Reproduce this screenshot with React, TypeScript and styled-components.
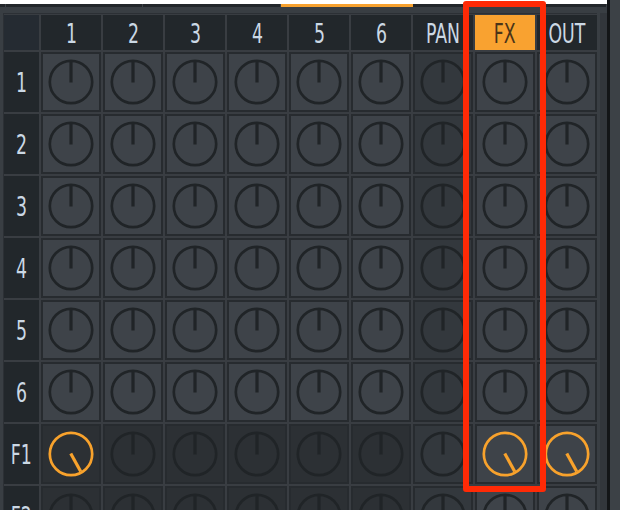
import styled, { createGlobalStyle } from "styled-components";

const GlobalStyle = createGlobalStyle`
  body {
    margin: 0;
    background: #ffffff;
    font-family: "Liberation Sans Narrow", "DejaVu Sans Condensed", "Liberation Sans", sans-serif;
  }
`;

type Tone = "normal" | "pan" | "dim";

const columns = ["1", "2", "3", "4", "5", "6", "PAN", "FX", "OUT"];
const rows = ["1", "2", "3", "4", "5", "6", "F1", "F2"];

const toneFor = (row: string, col: string): Tone => {
  const isFx = row.startsWith("F");
  if (col === "FX" || col === "OUT") return "normal";
  if (col === "PAN") return "pan";
  return isFx ? "dim" : "normal";
};

const isOn = (row: string, col: string) =>
  row === "F1" && (col === "1" || col === "FX" || col === "OUT");

const Knob = ({ on }: { on: boolean }) => {
  const color = on ? "#f8a22c" : "#202427";
  const angle = on ? 151 : 0;
  return (
    <svg width="46" height="46" viewBox="0 0 46 46">
      <circle cx="23" cy="23" r="21.2" fill="none" stroke={color} strokeWidth="2.7" />
      <line
        x1="23"
        y1="23.5"
        x2="23"
        y2="3"
        stroke={color}
        strokeWidth="3.2"
        transform={`rotate(${angle} 23 23)`}
      />
    </svg>
  );
};

const App = () => {
  return (
    <>
      <GlobalStyle />
      <Page>
        <Workspace>
          <TopWhite />
          <TopBar>
            <BarSeg $w={5} />
            <BarSeg $w={136} />
            <BarSeg $w={137} />
            <BarAccent $w={132} />
            <BarSeg $w={0} $grow />
          </TopBar>
          <Content>
            <Grid>
              <Corner />
              {columns.map((c) => (
                <HeaderCell key={c} $active={c === "FX"}>
                  <Label>{c}</Label>
                </HeaderCell>
              ))}
              {rows.map((r) => (
                <Row key={r} r={r} />
              ))}
            </Grid>
            <Track />
          </Content>
        </Workspace>
        <Divider />
        <SidePanel />
        <Highlight />
      </Page>
    </>
  );
};

const Row = ({ r }: { r: string }) => (
  <>
    <RowLabel>
      <Label>{r}</Label>
    </RowLabel>
    {columns.map((c) => (
      <KnobCell key={c} $tone={toneFor(r, c)}>
        <Knob on={isOn(r, c)} />
      </KnobCell>
    ))}
  </>
);

export default App;

const Page = styled.div`
  position: relative;
  display: flex;
  width: 620px;
  height: 510px;
  overflow: hidden;
`;

const Workspace = styled.div`
  width: 607px;
  flex-shrink: 0;
  background: #393e43;
  display: flex;
  flex-direction: column;
  overflow: hidden;
`;

const TopWhite = styled.div`
  flex-shrink: 0;
  height: 4px;
  background: #ffffff;
`;

const TopBar = styled.div`
  flex-shrink: 0;
  display: flex;
  height: 3px;
  background: #22262a;
`;

const BarSeg = styled.div<{ $w: number; $grow?: boolean }>`
  width: ${(p) => p.$w}px;
  flex: ${(p) => (p.$grow ? 1 : "none")};
  border-right: 1px solid #3b4045;
`;

const BarAccent = styled.div<{ $w: number }>`
  width: ${(p) => p.$w}px;
  background: #f7a12e;
`;

const Content = styled.div`
  display: flex;
  padding-top: 6px;
  flex-shrink: 0;
`;

const Grid = styled.div`
  margin-left: 3px;
  border-top: 1px solid #2c3035;
  border-left: 1px solid #2c3035;
  padding-top: 1px;
  display: grid;
  grid-template-columns: 35px repeat(9, 60px);
  grid-template-rows: 35px repeat(8, 60px);
  gap: 2px;
  background: #393d42;
`;

const Corner = styled.div`
  background: #252b32;
`;

const HeaderCell = styled.div<{ $active?: boolean }>`
  display: flex;
  align-items: center;
  justify-content: center;
  padding-top: 2px;
  background: ${(p) => (p.$active ? "#f9a230" : "#22272b")};
  color: ${(p) => (p.$active ? "#4a3418" : "#cbd8e4")};
  font-size: 26px;
  overflow: hidden;
`;

const Label = styled.span`
  display: inline-block;
  transform: scaleX(0.74);
  white-space: nowrap;
`;

const RowLabel = styled(HeaderCell)`
  background: #22272b;
  color: #cbd8e4;
`;

const toneBg: Record<Tone, string> = {
  normal: "#3e4349",
  pan: "#33383d",
  dim: "#2c3034",
};

const KnobCell = styled.div<{ $tone: Tone }>`
  display: flex;
  align-items: center;
  justify-content: center;
  border: 2px solid #272b2f;
  background: ${(p) => toneBg[p.$tone]};
`;

const Track = styled.div`
  margin-left: 3px;
  width: 7px;
  background: #32363b;
`;

const Divider = styled.div`
  flex-shrink: 0;
  width: 3px;
  background: #131517;
`;

const SidePanel = styled.div`
  flex: 1;
  background: #3c4146;
`;

const Highlight = styled.div`
  position: absolute;
  left: 463px;
  top: 1px;
  width: 83px;
  height: 491px;
  box-sizing: border-box;
  border: 6px solid #ff2a06;
  border-radius: 3px;
  pointer-events: none;
`;
